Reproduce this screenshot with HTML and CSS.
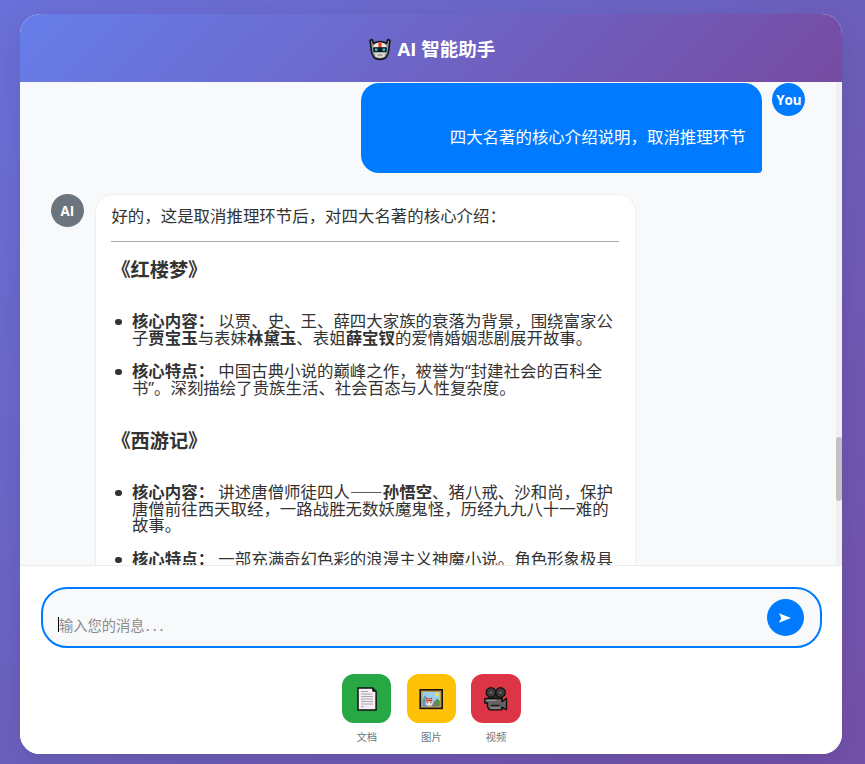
FILE: index.html
```
<!DOCTYPE html>
<html lang="zh-CN">

<head>
    <meta charset="utf-8" />
    <title>AI 智能助手</title>
    <link rel="stylesheet" href="styles.css">
</head>

<body>
    <div class="container">
        <div class="header">
            <svg class="robot" viewBox="0 0 22 23">
                <path d="M1 2.500 3.200 1.500 4.500 5.500 Q11 1.500 17.500 5.500 L18.800 1.500 21 2.500 20 10 Q19.800 17 16 20.200 Q11 22.500 6 20.200 Q2.200 17 2 10Z" fill="#8f9496" stroke="#121416" stroke-width="1.600" stroke-linejoin="round"/>
                <path d="M4.300 9 Q5 5 11 4.600 Q17 5 17.700 9Z" fill="#eeeae6"/>
                <path d="M9.400 4.400h3.200v4.800H9.400z" fill="#ef3b22"/>
                <path d="M5 13.500h12L15.300 18.800 Q11 20.600 6.700 18.800Z" fill="#dedad5"/>
                <rect x="4.300" y="9.200" width="13.400" height="5" rx="1" fill="#10181c"/>
                <path d="M6 10.600h2.500v2.300H6zM13.500 10.600h2.500v2.300h-2.500z" fill="#23c5ee"/>
                <path d="M8.500 17h5" stroke="#6d6d6d" stroke-width="1.200"/>
            </svg>
            <h1>AI 智能助手</h1>
        </div>

        <div class="chat">
            <div class="messages">
                <div class="message user">
                    <div class="bubble">四大名著的核心介绍说明，取消推理环节</div>
                    <div class="avatar">You</div>
                </div>
                <div class="message ai">
                    <div class="avatar">AI</div>
                    <div class="bubble">
                        <p>好的，这是取消推理环节后，对四大名著的核心介绍：</p>
                        <hr>
                        <h3>《红楼梦》</h3>
                        <ul>
                            <li><strong>核心内容：</strong> 以贾、史、王、薛四大家族的衰落为背景，围绕富家公子<strong>贾宝玉</strong>与表妹<strong>林黛玉</strong>、表姐<strong>薛宝钗</strong>的爱情婚姻悲剧展开故事。</li>
                            <li><strong>核心特点：</strong> 中国古典小说的巅峰之作，被誉为“封建社会的百科全书”。深刻描绘了贵族生活、社会百态与人性复杂度。</li>
                        </ul>
                        <h3>《西游记》</h3>
                        <ul>
                            <li><strong>核心内容：</strong> 讲述唐僧师徒四人<span class="dash">——</span><strong>孙悟空</strong>、猪八戒、沙和尚，保护唐僧前往西天取经，一路战胜无数妖魔鬼怪，历经九九八十一难的故事。</li>
                            <li><strong>核心特点：</strong> 一部充满奇幻色彩的浪漫主义神魔小说。角色形象极具</li>
                        </ul>
                    </div>
                </div>
            </div>
            <div class="scrollbar"><div class="thumb"></div></div>
        </div>

        <div class="footer">
            <div class="input-box">
                <div class="input"><span class="caret"></span>输入您的消息<span class="dots">...</span></div>
                <button class="send">
                    <svg viewBox="0 0 14 12"><path d="M1 1.200 13 6 1 10.800 3.300 6Z" fill="#fff"/></svg>
                </button>
            </div>
            <div class="tools">
                <div class="tool">
                    <div class="tool-icon doc">
                        <svg viewBox="0 0 30 30">
                            <path d="M6 5h14.600l3.500 3.500V27H6z" fill="#f3eff2" stroke="#111" stroke-width="1.500"/>
                            <path d="M20.300 5v3.800h3.800z" fill="#111"/>
                            <path d="M9 8.500h7M9 11h11.500M9 13.500h12M9 16h12M9 18.500h12M9 21h12M9 23.700h3" stroke="#aaa6aa" stroke-width="1"/>
                        </svg>
                    </div>
                    <span>文档</span>
                </div>
                <div class="tool">
                    <div class="tool-icon pic">
                        <svg viewBox="0 0 30 30">
                            <rect x="4.200" y="6.800" width="22" height="18.600" fill="#c6984b" stroke="#17130e" stroke-width="1.600"/>
                            <rect x="6.500" y="9" width="17.400" height="14.200" fill="#9ccfea"/>
                            <path d="M6.500 17 9 12l4 6v5.200H6.500z" fill="#5897c4"/>
                            <path d="M16 23.200 21 15.500l2.900 2.500v5.200z" fill="#3f9d48"/>
                            <path d="M15 23.200 19.500 17l2 6.200z" fill="#777"/>
                            <circle cx="21" cy="11.500" r="1.800" fill="#ffdb55"/>
                            <path d="M9.800 14 11.300 15.300h3.400l1.500-1.300.4 7.500q-3.500 2.500-7 0z" fill="#eee4dd"/>
                            <path d="M9.800 14 11.300 15.300h3.400l1.500-1.300v2.500H9.800z" fill="#8d5145"/>
                            <path d="M9.700 17h6.700v1.500H9.700z" fill="#dd3c2e"/>
                            <path d="M10.800 19.200h1v1h-1zM14.400 19.200h1v1h-1z" fill="#222"/>
                        </svg>
                    </div>
                    <span>图片</span>
                </div>
                <div class="tool">
                    <div class="tool-icon video">
                        <svg viewBox="0 0 30 30">
                            <g stroke="#101010" stroke-width="1.300" stroke-linejoin="round">
                                <path d="M8 11h13v6H8z" fill="#303030"/>
                                <circle cx="10" cy="9.500" r="4.800" fill="#3b3b3b"/>
                                <circle cx="19.500" cy="9.500" r="4.800" fill="#3b3b3b"/>
                                <path d="M3.800 15.500H21v3.200l4.500-3.500v11.500L21 24v2.800H8.500L6.500 24v-4H3.800z" fill="#626262"/>
                            </g>
                            <path d="M10 22.500h8.500" stroke="#1c1c1c" stroke-width="1.400"/>
                            <path d="M5.500 17.300h10M9.500 25h9.500" stroke="#a5a5a5"/>
                            <circle cx="10" cy="9.500" r="1.100" fill="#777"/>
                            <circle cx="19.500" cy="9.500" r="1.100" fill="#777"/>
                            <circle cx="18.300" cy="17.800" r="1" fill="#e54534"/>
                        </svg>
                    </div>
                    <span>视频</span>
                </div>
            </div>
        </div>
    </div>
</body>

</html>
```
FILE: styles.css
```
* {
    margin: 0;
    padding: 0;
    box-sizing: border-box;
}

body {
    height: 764px;
    padding: 14px 22.6px 10px 20.4px;
    overflow: hidden;
    font-family: "Open Sans", "Noto Sans CJK SC", sans-serif;
    font-size: 16.45px;
    color: #333;
    background: linear-gradient(135deg, #6a70d9 0%, #6c60bd 50%, #7450aa 100%);
}

.container {
    display: flex;
    flex-direction: column;
    height: 740px;
    border-radius: 20px;
    overflow: hidden;
    background: #fff;
    box-shadow: 0 10px 30px rgba(0, 0, 0, 0.1);
}

.header {
    display: flex;
    flex: none;
    align-items: center;
    justify-content: center;
    gap: 7px;
    height: 68px;
    padding: 2px 0 0 1px;
    color: #fff;
    background: linear-gradient(135deg, #667eea 0%, #764ba2 100%);
}

.header h1 {
    font-size: 18.5px;
    line-height: 26px;
}

.robot {
    width: 22px;
    height: 23px;
}

.chat {
    display: flex;
    flex: none;
    height: 483px;
    overflow: hidden;
    background: #f8f9fb;
}

.messages {
    flex: 1;
    padding: 1px 31px 0 30.5px;
}

.scrollbar {
    width: 6px;
    padding-top: 355px;
    background: #f1f1f1;
}

.thumb {
    height: 64px;
    border-radius: 3px;
    background: #c1c1c1;
}

.message {
    display: flex;
    align-items: flex-start;
    gap: 10.8px;
    margin-bottom: 21px;
}

.user {
    justify-content: flex-end;
}

.avatar {
    flex: none;
    width: 33px;
    height: 33px;
    border-radius: 50%;
    text-align: center;
    font-size: 13.4px;
    font-weight: bold;
    line-height: 34px;
    color: #fff;
    background: #6c757d;
}

.user .avatar {
    background: #007bff;
}

.user .bubble {
    width: 401px;
    height: 90px;
    padding: 41px 16px 0;
    border-radius: 18px 18px 4px 18px;
    line-height: 26px;
    text-align: right;
    color: #fff;
    background: #007bff;
}

.ai .bubble {
    width: 541px;
    padding: 12px 16px 0 15.700px;
    border: 1px solid #eceff2;
    border-radius: 18px;
    line-height: 16.6px;
    background: #fff;
}

.bubble p {
    line-height: 18px;
}

.bubble hr {
    margin: 15.5px 0 17.5px;
    border: 0;
    border-top: 1px solid #aaa;
}

.bubble h3 {
    height: 20px;
    font-size: 19.2px;
    line-height: 21px;
}

.bubble ul {
    padding: 34px 0 0 20.5px;
    list-style: none;
}

.bubble li {
    position: relative;
    margin-bottom: 17.2px;
}

.bubble li::before {
    content: "";
    position: absolute;
    top: 5.5px;
    left: -16.5px;
    width: 6.5px;
    height: 6.5px;
    border-radius: 50%;
    background: #333;
}

/* keeps the two dashes joined without making the line taller */
.dash {
    font-family: "Noto Sans CJK SC", sans-serif;
    line-height: 0;
}

.bubble ul + h3 {
    margin-top: 33.5px;
}

.footer {
    flex: 1;
    padding: 21px 20.5px 0;
    border-top: 1px solid #e9ecef;
    background: #fff;
}

.input-box {
    display: flex;
    align-items: center;
    justify-content: space-between;
    height: 61px;
    padding: 0 16px 0 15px;
    border: 2px solid #007bff;
    border-radius: 26px;
    background: #f8f9fa;
}

.input {
    display: flex;
    align-items: center;
    padding-top: 14px;
    font-family: "Noto Sans CJK SC", sans-serif;
    font-size: 14.3px;
    line-height: 20px;
    color: #8c8c8c;
}

.caret {
    width: 1px;
    height: 15px;
    background: #000;
}

.dots {
    margin-left: 1px;
    letter-spacing: 3px;
}

.send {
    width: 37px;
    height: 37px;
    border: 0;
    border-radius: 50%;
    background: #007bff;
}

.send svg {
    display: block;
    width: 14px;
    height: 12px;
    margin: 1px auto 0;
}

.tools {
    display: flex;
    justify-content: center;
    gap: 15.3px;
    margin-top: 25.5px;
}

.tool {
    width: 49.3px;
    text-align: center;
    font-size: 10.3px;
    line-height: 15px;
    color: #6c757d;
}

.tool-icon {
    height: 49.3px;
    margin-bottom: 7px;
    padding: 9.5px;
    border-radius: 12px;
}

.tool-icon svg {
    display: block;
    width: 30px;
    height: 30px;
}

.doc {
    background: #28a745;
}

.pic {
    background: #ffc107;
}

.video {
    background: #dc3545;
}
```
